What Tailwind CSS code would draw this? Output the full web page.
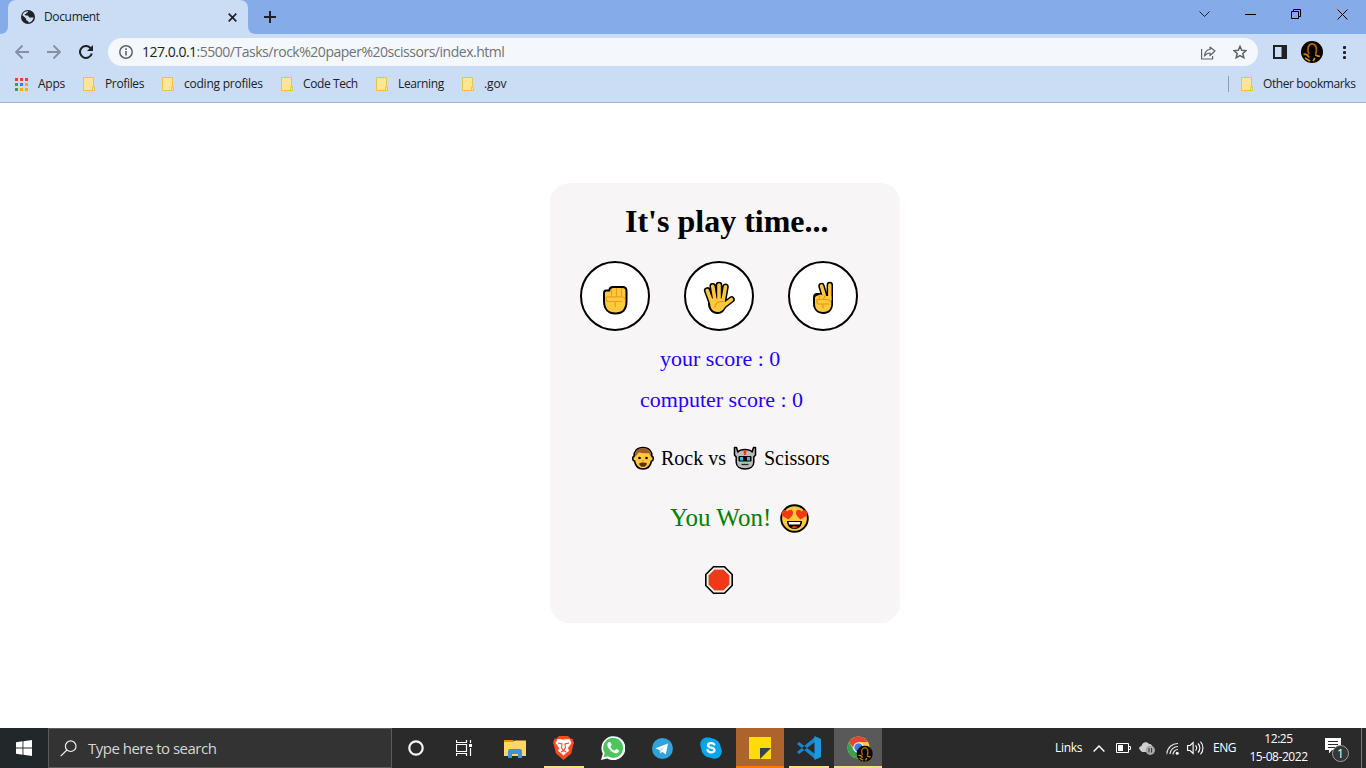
<!DOCTYPE html>
<html lang="en">
<head>
<meta charset="utf-8">
<title>Document</title>
<script src="https://cdn.jsdelivr.net/npm/@tailwindcss/browser@4"></script>
</head>
<body class="w-[1366px] h-[768px] overflow-hidden bg-white flex flex-col font-['Open_Sans','Noto_Sans',sans-serif] text-[#202124]">
<svg class="hidden">
  <defs>
    <symbol id="folder" viewBox="0 0 12 14"><path d="M.5.5h10v9.500h1v3.500h-11z" fill="#ffe694" stroke="#ecc445"/><path d="M9.500 13.500v-3.500h1" fill="none" stroke="#ecc445"/></symbol>
    <symbol id="avatar" viewBox="0 0 22 22"><circle cx="11" cy="11" r="11" fill="#080503"/><path d="M8 13C5.500 8 7.500 3 11 2.800c4.500 0 5.500 6 3.500 10.200" fill="none" stroke="#a86408" stroke-width="1.800"/><path d="M2.500 13.500c2.500-1 4.500.5 5.500 3M14 14c2 0 3 2 5 1M4 17l5 3M14 17l-2 3" fill="none" stroke="#d38a10" stroke-width="1.700"/><path d="M9 6c2-3 4 1 4 6l-2 4-2-4z" fill="#000"/></symbol>
  </defs>
</svg>

<!-- Tab strip -->
<header class="h-[34px] shrink-0 bg-[#85ace9] flex items-start">
  <svg class="w-2 h-2 self-end" viewBox="0 0 8 8"><path d="M8 0v8H0C5 8 8 5 8 0" fill="#cbdcf5"/></svg>
  <div class="w-[240px] h-[34px] bg-[#cbdcf5] rounded-t-lg flex items-center">
    <svg class="ml-[13px] w-[14px] h-[14px]" viewBox="0 0 14 14"><circle cx="7" cy="7" r="7" fill="#202124"/><path d="M7.200 1.300c-.1 1-.9 1.500-1.700 1.500-.2 1.200-1 1.400-1.800 1.400 0 1.200.6 1.200 2.600 1.200 1.600 0 1.200 2 2.500 2 1 0 2.200.1 3.700-.2-.2 3-2.300 5.200-5.200 5.400V11C5.500 11 5 10 5 8.500L1.400 5.200C2 2.700 4.200 1.100 7.200 1.300z" fill="#cbdcf5"/></svg>
    <span class="ml-[9px] w-[184px] text-[12px] leading-4 tracking-[-0.35px]">Document</span>
    <svg class="w-[9px] h-[9px] -ml-[0.5px]" viewBox="0 0 9 9"><path d="M.7.7l7.600 7.600M8.300.7L.7 8.300" stroke="#202124" stroke-width="1.700"/></svg>
  </div>
  <svg class="w-2 h-2 self-end" viewBox="0 0 8 8"><path d="M0 0v8h8C3 8 0 5 0 0" fill="#cbdcf5"/></svg>
  <svg class="ml-2 mt-[11px] w-3 h-3" viewBox="0 0 12 12"><path d="M6 0v12M0 6h12" stroke="#202124" stroke-width="2"/></svg>
  <div class="ml-auto mr-[18px] flex items-start">
    <svg class="mt-[11px] w-[11px] h-[7px] mr-[35px]" viewBox="0 0 11 7"><path d="M.5.5l5 5 5-5" fill="none" stroke="#202124"/></svg>
    <svg class="mt-[14px] w-[11px] h-px mr-[35px]" viewBox="0 0 11 1"><path d="M0 .5h11" stroke="#000"/></svg>
    <svg class="mt-[9px] w-[11px] h-[11px] mr-[35px]" viewBox="0 0 11 11"><path d="M.5 2.500h7v7h-7zM2.500 2.500v-2h7v7h-2" fill="none" stroke="#000"/></svg>
    <svg class="mt-[9px] w-[11px] h-[11px]" viewBox="0 0 11 11"><path d="M.5.5l10 10M10.500.5l-10 10" stroke="#000" stroke-width="1"/></svg>
  </div>
</header>

<!-- Toolbar -->
<div class="h-[36px] shrink-0 bg-[#cbdcf5] flex items-center">
  <svg class="ml-[15px] w-[14px] h-[14px]" viewBox="0 0 14 14"><path d="M14 7H1M7.500.5L1 7l6.500 6.500" fill="none" stroke="#858fa5" stroke-width="1.900"/></svg>
  <svg class="ml-[18px] w-[14px] h-[14px]" viewBox="0 0 14 14"><path d="M0 7h13M6.500.5L13 7l-6.500 6.500" fill="none" stroke="#858fa5" stroke-width="1.900"/></svg>
  <svg class="ml-[18px] w-[14px] h-[14px]" viewBox="0 0 14 14"><path d="M11.500 3A6 6 0 1 0 12.800 8.500" fill="none" stroke="#202124" stroke-width="2"/><path d="M14 0v6H8z" fill="#202124"/></svg>
  <div class="ml-[15px] w-[1150px] h-7 rounded-full bg-[#f4f8fd] flex items-center">
    <svg class="ml-[11px] w-[14px] h-[14px]" viewBox="0 0 14 14"><circle cx="7" cy="7" r="6.200" fill="none" stroke="#5f6368" stroke-width="1.500"/><path d="M7 6v4.500M7 3.300v1.700" stroke="#5f6368" stroke-width="1.600"/></svg>
    <span class="ml-[9px] text-[14px] leading-5 tracking-[-0.48px] text-[#707276]"><span class="text-[#202124] tracking-[-0.5px]">127.0.0.1</span>:5500/Tasks/rock%20paper%20scissors/index.html</span>
    <svg class="ml-auto w-[15px] h-[14px] mt-px" viewBox="0 0 15 14"><path d="M.6 3v10h11v-3M9 1l5 4-5 4.500V7C6.500 7 5 8 3.500 10 3.800 6.500 5.500 3.800 9 3.500z" fill="none" stroke="#5f6368" stroke-width="1.200" stroke-linejoin="round"/></svg>
    <svg class="ml-[17px] mr-[11px] w-[14px] h-[14px]" viewBox="0 0 14 14"><path d="M7 1.300l1.700 3.900 4.300.4-3.200 2.900 1 4.200L7 10.500l-3.800 2.200 1-4.200L1 5.600l4.300-.4z" fill="none" stroke="#5f6368" stroke-width="1.500"/></svg>
  </div>
  <svg class="ml-[15px] w-[14px] h-[14px]" viewBox="0 0 14 14"><path fill-rule="evenodd" d="M0 0h14v14H0zM2 2v10h6.500V2z" fill="#202124"/></svg>
  <svg class="ml-[14px] w-[22px] h-[22px]"><use href="#avatar"/></svg>
  <svg class="ml-[20px] w-[3px] h-[13px]" viewBox="0 0 3 13"><g fill="#202124"><circle cx="1.500" cy="1.500" r="1.600"/><circle cx="1.500" cy="6.500" r="1.600"/><circle cx="1.500" cy="11.500" r="1.600"/></g></svg>
</div>

<!-- Bookmarks bar -->
<nav class="h-[33px] shrink-0 bg-[#cbdcf5] border-b border-[#a3b3cc] flex items-center pb-[4px] text-[12px] leading-4 whitespace-nowrap">
  <svg class="ml-[15px] w-[13px] h-[13px]" viewBox="0 0 13 13"><path d="M0 0h3v3H0zM5 0h3v3H5zM10 0h3v3h-3z" fill="#ea4335"/><path d="M0 5h3v3H0zM0 10h3v3H0z" fill="#34a05a"/><path d="M5 5h3v3H5z" fill="#2388f5"/><path d="M10 5h3v3h-3zM5 10h3v3H5zM10 10h3v3h-3z" fill="#f9ab00"/></svg>
  <span class="ml-[10px] w-[45px] tracking-[-0.25px]">Apps</span>
  <svg class="w-3 h-[14px]"><use href="#folder"/></svg><span class="ml-[10px] w-[57px] tracking-[-0.35px]">Profiles</span>
  <svg class="w-3 h-[14px]"><use href="#folder"/></svg><span class="ml-[10px] w-[97px] tracking-[-0.24px]">coding profiles</span>
  <svg class="w-3 h-[14px]"><use href="#folder"/></svg><span class="ml-[10px] w-[73px] tracking-[-0.4px]">Code Tech</span>
  <svg class="w-3 h-[14px]"><use href="#folder"/></svg><span class="ml-[10px] w-[64px] tracking-[-0.38px]">Learning</span>
  <svg class="w-3 h-[14px]"><use href="#folder"/></svg><span class="ml-[10px] tracking-[-0.1px]">.gov</span>
  <span class="ml-auto w-px h-4 bg-[#8e9bb3]"></span>
  <svg class="ml-[12px] w-3 h-[14px]"><use href="#folder"/></svg><span class="ml-[10px] w-[103px] tracking-[-0.4px]">Other bookmarks</span>
</nav>

<!-- Page -->
<main class="h-[625px] shrink-0 pt-20 pl-[550px]">
  <section class="w-[350px] h-[440px] rounded-[20px] bg-[#f7f5f6] flex flex-col font-['Liberation_Serif',serif] text-black whitespace-nowrap">
    <h1 class="mt-[20px] ml-[75px] text-[32px] leading-9 font-bold">It's play time...</h1>
    <div class="mt-[22px] ml-[30px] flex gap-[34px]">
      <div class="size-[70px] rounded-full border-2 border-black bg-white">
        <svg class="ml-[20px] mt-[22px] w-[26px] h-[30px]" viewBox="0 0 26 30"><path d="M4 5.500h3.200C7.500 3 9 2 11 2h9.500c2.500 0 4 1.500 4 4V16c0 8-4 12.500-11 12.500S2 24 2 16V8c0-1.500.7-2.500 2-2.500z" fill="#ffc83d" stroke="#000" stroke-width="2"/><path d="M9.500 4v7.500M14.500 3v8.500M19.500 3v8.500M5 11.800h15c1.500 0 3 1 3 3M20 16.500H6.500c-2 0-2.500-1.500-2.500-3s1-1.700 2-1.700M7.500 16.500h4c1.200 0 1.800.7 1.800 2V22" fill="none" stroke="#e6a21e" stroke-width="1.200"/></svg>
      </div>
      <div class="size-[70px] rounded-full border-2 border-black bg-white">
        <svg class="ml-[17px] mt-[17px] w-[32px] h-[35px]" viewBox="0 0 32 35"><g stroke-linecap="round" fill="none"><path d="M4.200 10.500L8.500 22M9.700 6.300L12 20M16 5v15M22.500 6.800L20 21M28.500 19.500L20 26" stroke="#000" stroke-width="6.600"/><path d="M5.500 18h17v4l2 2C22 31 19 34 14.500 34 8 34 5 28 5 24z" fill="#000"/><path d="M4.200 10.500L8.500 22M9.700 6.300L12 20M16 5v15M22.500 6.800L20 21M28.500 19.500L20 26" stroke="#ffc83d" stroke-width="3.600"/><path d="M7.200 18.500h14.500v3l1.800 2.500C20.500 30 18.500 32 14.800 32 9.500 32 7.200 28 7.200 24z" fill="#ffc83d"/><path d="M21 21.500c-6-.5-8.500 2-9 5.500" stroke="#e19a16" stroke-width="1.300"/></g></svg>
      </div>
      <div class="size-[70px] rounded-full border-2 border-black bg-white">
        <svg class="ml-[22px] mt-[17px] w-[22px] h-[35px]" viewBox="0 0 22 35"><g fill="none" stroke-linecap="round"><path d="M9.500 6L13 18M17.800 5v15" stroke="#000" stroke-width="6.400"/><path d="M5 13h7l9 2v9c0 6-4 10-9.500 10S1 30 1 24v-7c0-2 1-4 4-4z" fill="#000"/><path d="M9.500 6L13 18M17.800 5v15" stroke="#ffc83d" stroke-width="3.400"/><path d="M6 15.500c2-1.500 4-1 6 .5h7.300v8c0 5-3 8-8.200 8S3 29 3 24v-6c0-1 1-2.500 3-2.500z" fill="#ffc83d"/><path d="M4.500 19.500H15c2 0 3 1 3.500 2M17 24H7c-3 0-3-4.500 0-4.500M6 24h3c1.500 0 2 1 2 2v2M8 16l-1 3M13 16l-1.500 3" stroke="#e19a16" stroke-width="1.200"/></g></svg>
      </div>
    </div>
    <p class="mt-[14px] ml-[110px] text-[22px] leading-7 text-[#2600ff]">your score : 0</p>
    <p class="mt-[13px] ml-[90px] text-[22px] leading-7 text-[#2600ff]">computer score : 0</p>
    <div class="mt-[30px] ml-[82px] h-7 flex items-center text-[20px]">
      <svg class="w-[22px] h-6" viewBox="0 0 22 24"><path d="M11 1.500c6 0 9 4 9 9 2 0 1.500 4.500-.5 4.500-1 5-4 8-8.500 8s-7.500-3-8.500-8C.5 15 0 10.500 2 10.500c0-5 3-9 9-9z" fill="#ffc83d" stroke="#000" stroke-width="1.600"/><path d="M3 10.500c-.5-5 3-8.200 8-8.200s8.500 3.200 8 8.200c-1.500-1-1-2.500-2.500-3.500-4 .8-8-.5-9.500-.5C5 7.500 5 9.500 3 10.500z" fill="#a05a2c"/><circle cx="7.500" cy="12" r="1.300"/><circle cx="14.500" cy="12" r="1.300"/><path d="M10 14.500h2" stroke="#e8852e"/><path d="M7 17.500c2-1.200 6-1.200 8 0-.5 2.500-2 3.300-4 3.300s-3.500-.8-4-3.300z" fill="#5a3014"/></svg>
      <span class="ml-[7px] w-[72px]">Rock vs</span>
      <svg class="w-6 h-6" viewBox="0 0 24 24"><path d="M1.500 1.500h2L4.800 6C6.500 4 9 3.500 12 3.500S17.500 4 19.200 6l1.300-4.500h2V9l-1.700 2v5c0 4.500-3.600 7-8.800 7s-8.800-2.500-8.800-7v-5L1.500 9z" fill="#bbb" stroke="#000" stroke-width="1.500" stroke-linejoin="round"/><path d="M10.500 4.300h3L13 9h-2z" fill="#f03a17"/><rect x="5.500" y="10" width="13" height="5.500" rx="1" fill="#000"/><path d="M7 11h3v3.500H7zM14 11h3v3.500h-3z" fill="#20c5ee"/><path d="M8.500 18.500h7" stroke="#222" stroke-width="1.300"/></svg>
      <span class="ml-[7px]">Scissors</span>
    </div>
    <div class="mt-[30px] ml-[120px] h-8 flex items-center text-[25px] text-[#008000]">
      <span class="w-[110px]">You Won!</span>
      <svg class="w-[29px] h-[29px]" viewBox="0 0 29 29"><circle cx="14.500" cy="14.500" r="13.300" fill="#ffc83d" stroke="#000" stroke-width="1.900"/><path d="M8.500 15.500L2.500 12C.8 10 2 6 4.500 6c1.500 0 2.400.6 2.800 1.700C8.300 6 12 4.500 13 8c.5 3-2.500 5.500-4.500 7.500zM20.500 15.500l6-3.500c1.700-2 .5-6-2-6-1.500 0-2.400.6-2.800 1.700C20.700 6 17 4.500 16 8c-.5 3 2.500 5.500 4.500 7.500z" fill="#f03a17"/><path d="M7 17h15c0 5-3 8-7.500 8S7 22 7 17z" fill="#000"/><path d="M8.500 18h12l-.8 2.500H9.300z" fill="#fff"/><path d="M11.500 23.500c1-2 5-2 6 0-2 1-4 1-6 0z" fill="#f03a17"/></svg>
    </div>
    <svg class="mt-[32px] ml-[155px] w-[28px] h-[28px]" viewBox="0 0 28 28"><path d="M8.500.8h11L27.200 8.500v11L19.500 27.200h-11L.8 19.500v-11z" fill="#f4f0e9" stroke="#000" stroke-width="1.600"/><path d="M9.500 3.500h9L24.500 9.500v9L18.500 24.500h-9L3.500 18.500v-9z" fill="#f03a17" stroke="#c9beb4" stroke-width=".6"/></svg>
  </section>
</main>

<!-- Taskbar -->
<footer class="h-10 shrink-0 bg-[#2a2a2b] flex items-center text-white">
  <div class="w-12 h-10 bg-[#22272a] flex items-center justify-center"><svg class="w-4 h-4" viewBox="0 0 16 16"><path d="M0 2.200L6.500 1.300v6.200H0zM7.400 1.200L16 0v7.500H7.400zM0 8.400h6.500v6.300L0 13.800zM7.400 8.400H16V16l-8.600-1.200z" fill="#fff"/></svg></div>
  <div class="w-[344px] h-10 bg-[#333] border border-[#5c5c5c] flex items-center">
    <svg class="ml-[11px] w-[17px] h-[17px]" viewBox="0 0 17 17"><circle cx="10.700" cy="6.200" r="5.300" fill="none" stroke="#f0f0f0" stroke-width="1.200"/><path d="M6.900 10L.7 16.200" stroke="#f0f0f0" stroke-width="1.200"/></svg>
    <span class="ml-[11px] text-[15px] leading-5 tracking-[-0.51px] text-[#d6d6d6]">Type here to search</span>
  </div>
  <div class="w-12 h-10 flex items-center justify-center"><svg class="w-4 h-4" viewBox="0 0 16 16"><circle cx="8" cy="8" r="6.700" fill="none" stroke="#f5f5f5" stroke-width="2.200"/></svg></div>
  <div class="w-12 h-10 flex items-center justify-center"><svg class="w-4 h-4" viewBox="0 0 16 16"><path d="M.5 0v2.500h10V0M.5 16v-2.500h10V16M.5 4.500h10v7H.5zM14.500 0v3M14.500 8v8" fill="none" stroke="#fff" stroke-width="1.200"/><path d="M13 4h3v3h-3z" fill="#fff"/></svg></div>
  <div class="w-[52px] h-10 flex items-center justify-center pl-px"><svg class="w-[22px] h-[19px]" viewBox="0 0 22 19"><path d="M0 1h9l2 2H0z" fill="#e19a0a"/><path d="M0 3h9l2-1.500h11v15.500H0z" fill="#ffd767"/><path d="M4 19v-7q0-2 2-2h10q2 0 2 2v7h-4v-4H8v4z" fill="#3e93dc"/></svg></div>
  <div class="w-[48px] h-10 flex justify-center">
    <div class="w-10 h-10 border-b-2 border-[#ffdc89] flex items-center justify-center"><svg class="w-[21px] h-6 mt-px mr-px" viewBox="0 0 21 24"><path d="M6 0h9l2.500 2.500 2 .2L21 7l-.8 2-2 8.500L10.500 24 3 17.500.8 9 0 7l1.500-4.300 2-.2z" fill="#fb4b20"/><path d="M10.500 3.500l6-.5L18.500 7l-3.500 5 1 3-3 2-2.500 2.500L8 17l-3-2 1-3L2.500 7l2-4z" fill="#fff"/><path d="M5 7l4 1-.5 3.500L10.500 15l2-3.500L12 8l4-1M8 16l2.500-1.500L13 16" fill="none" stroke="#fb4b20" stroke-width="1.100"/></svg></div>
  </div>
  <div class="w-[50px] h-10 flex items-center justify-center"><svg class="w-6 h-6" viewBox="0 0 24 24"><path d="M0 24l1.800-6.200A12 12 0 1 1 6.300 22.500z" fill="#fff"/><path d="M2.500 21.500l1.200-4.200a10 10 0 1 1 3 3z" fill="#4dc45d"/><path d="M8 6c-2 1-2 3.500-.8 5.500 1.500 2.600 3.600 4.800 7 5.800 2 .5 4-1 3.800-2.700-.8-.8-2-1.300-2.800-1.600l-1.500 1.700c-2-.8-3.400-2.200-4.200-4l1.200-1.600L9.500 6.200z" fill="#fff"/></svg></div>
  <div class="w-12 h-10 flex items-center justify-center"><svg class="w-[21px] h-[21px]" viewBox="0 0 21 21"><circle cx="10.500" cy="10.500" r="10.500" fill="#2fa3dc"/><path d="M3.500 10.300L16 5.500l-2.200 11-3.500-2.700-2 1.700-.8-3.400z" fill="#fff"/><path d="M7.800 12l5.400-4-4 4.700-.9 2.500" fill="#bed9e8"/></svg></div>
  <div class="w-[50px] h-10 flex items-center justify-center"><svg class="w-[22px] h-[22px]" viewBox="0 0 22 22"><circle cx="7.500" cy="7.500" r="7.300" fill="#0b9de0"/><circle cx="14.500" cy="14.500" r="7.300" fill="#08a6ed"/><circle cx="11" cy="11" r="9.800" fill="#08a6ed"/><path d="M14.200 7.500c-1-2-6.200-2.100-6.200.7 0 3.200 6.500 1.500 6.500 4.800 0 3.300-6.200 3-7 0" fill="none" stroke="#fff" stroke-width="2.300" stroke-linecap="round"/></svg></div>
  <div class="w-12 h-10 bg-[#ac632c] border-b-2 border-[#ff7700] flex items-center justify-center"><svg class="w-[22px] h-[22px] mt-[2px]" viewBox="0 0 22 22"><path d="M0 0h22v22H0z" fill="#ffdb08"/><path d="M11 11h11L11 22z" fill="#39404b"/></svg></div>
  <div class="w-[50px] h-10 flex justify-center">
    <div class="w-10 h-10 border-b-2 border-[#ffdc89] flex items-center justify-center"><svg class="w-6 h-6 mt-[2px]" viewBox="0 0 24 24"><path d="M0 8l2-2 16 12v5zM0 16l2 2L18 6V1z" fill="#1688cf"/><path d="M17.500 0L24 3v18l-6.500 3z" fill="#2296de"/></svg></div>
  </div>
  <div class="w-12 h-10 bg-[#59595a] border-b-2 border-[#ffdc89] flex items-center justify-center"><svg class="w-[26px] h-[26px] mt-[3px] ml-[3px]" viewBox="0 0 26 26"><circle cx="11.500" cy="11.500" r="11" fill="#ffcd40"/><path d="M2 6a11 11 0 0 1 19 0H11.500L8 14z" fill="#e84435"/><path d="M2 6l4.800 8.500 7 2-3 6A11 11 0 0 1 2 6z" fill="#34a153"/><circle cx="11.500" cy="11.500" r="5.200" fill="#fff"/><circle cx="11.500" cy="11.500" r="4.200" fill="#3b7ded"/><g transform="translate(9.500 9.500) scale(.74)"><use href="#avatar" width="22" height="22"/></g></svg></div>
  <div class="ml-auto h-10 flex items-center text-[12px] whitespace-nowrap">
    <span class="w-[38px] tracking-[-0.3px]">Links</span>
    <svg class="w-[12px] h-[7px]" viewBox="0 0 12 7"><path d="M.6 6.400L6 1l5.400 5.400" fill="none" stroke="#fff" stroke-width="1.400"/></svg>
    <svg class="ml-[11px] w-[15px] h-[10px]" viewBox="0 0 15 10"><path d="M.5.5h12v9H.5zM12.500 3.500h2v3h-2" fill="none" stroke="#fff"/><path d="M2 2h5v6H2z" fill="#fff"/></svg>
    <svg class="ml-[8px] w-[16px] h-[14px]" viewBox="0 0 16 14"><path d="M1 9C-1 7 1 5 2.500 5 3 1 8 0 10 3c3 0 3 2 4 4l-3 4H3z" fill="#d0d0d0"/><circle cx="11.300" cy="9.300" r="4.700" fill="#aaa"/><path d="M10 7v4.500M12.600 7v4.500" stroke="#333"/></svg>
    <svg class="ml-[11px] w-[13px] h-[13px]" viewBox="0 0 13 13"><path d="M1 11.500A10.500 10.500 0 0 1 12 1.500M4 12A8 8 0 0 1 12 4.500M7 12.500A5 5 0 0 1 12 7.500" fill="none" stroke="#e2e2e2" stroke-width="1.200"/><path d="M.7 9v3.500" stroke="#888"/><circle cx="11.200" cy="11.200" r="1.500" fill="#fff"/></svg>
    <svg class="ml-[8px] w-[17px] h-[14px]" viewBox="0 0 17 14"><path d="M.6 4.500h2.500l3-3v11l-3-3H.6zM8.500 4.500c1.400 1.500 1.400 3.500 0 5M11 2.500c2.500 2.600 2.500 6.400 0 9M13.500.7c3.300 3.600 3.300 9 0 12.600" fill="none" stroke="#fff" stroke-width="1.100"/></svg>
    <span class="ml-[9px] w-[36px] tracking-[-0.5px]">ENG</span>
    <div class="w-[59px] text-center leading-[18px] tracking-[-0.45px]"><div>12:25</div><div>15-08-2022</div></div>
    <svg class="ml-[17px] w-[25px] h-6 mt-1" viewBox="0 0 25 24"><path d="M0 0h16v12H7l-3 3.500V12H0z" fill="#fff"/><path d="M3 3.500h10M3 6.500h10M3 9.500h7" stroke="#292a2c"/><circle cx="15.500" cy="15.500" r="8" fill="#353637" stroke="#a0a0a0"/><text x="15.500" y="19.500" fill="#fff" text-anchor="middle" class="text-[12px]">1</text></svg>
    <span class="ml-[11px] mr-1 w-px h-10 bg-[#777]"></span>
  </div>
</footer>
</body>
</html>
